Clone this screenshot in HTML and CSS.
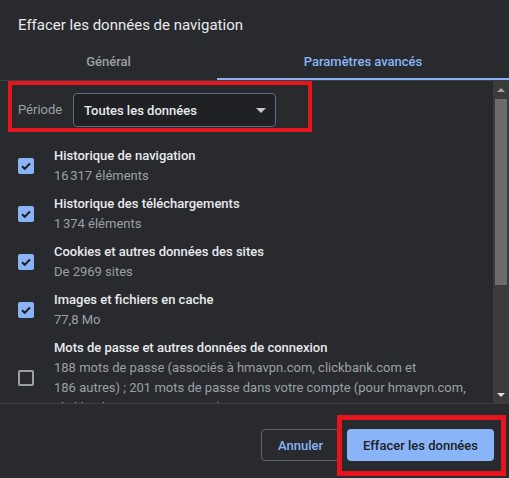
FILE: index.html
```html
<!DOCTYPE html>
<html lang="fr">
<head>
<meta charset="utf-8">
<title>Effacer les données de navigation</title>
<link rel="stylesheet" href="styles.css">
</head>
<body>
<div class="dialog">
  <div class="title">Effacer les données de navigation</div>
  <div class="tabs">
    <div class="tab">Général</div>
    <div class="tab active">Paramètres avancés</div>
  </div>
  <div class="body">
    <div class="scroll">
      <div class="period">
        <span class="period-label">Période</span>
        <div class="select">
          <span>Toutes les données</span>
          <svg class="caret" width="10" height="5" viewBox="0 0 10 5"><path d="M0 0h10L5 5z" fill="#c4c7cc"/></svg>
        </div>
      </div>
      <div class="row">
        <span class="cb checked"><svg width="16" height="16" viewBox="0 0 16 16"><path d="M4 8.2l2.7 2.6L12 5.5" fill="none" stroke="#202124" stroke-width="2"/></svg></span>
        <div class="text"><div class="label">Historique de navigation</div><div class="sub">16&#8239;317 éléments</div></div>
      </div>
      <div class="row">
        <span class="cb checked"><svg width="16" height="16" viewBox="0 0 16 16"><path d="M4 8.2l2.7 2.6L12 5.5" fill="none" stroke="#202124" stroke-width="2"/></svg></span>
        <div class="text"><div class="label">Historique des téléchargements</div><div class="sub">1&#8239;374 éléments</div></div>
      </div>
      <div class="row">
        <span class="cb checked"><svg width="16" height="16" viewBox="0 0 16 16"><path d="M4 8.2l2.7 2.6L12 5.5" fill="none" stroke="#202124" stroke-width="2"/></svg></span>
        <div class="text"><div class="label">Cookies et autres données des sites</div><div class="sub">De 2969 sites</div></div>
      </div>
      <div class="row">
        <span class="cb checked"><svg width="16" height="16" viewBox="0 0 16 16"><path d="M4 8.2l2.7 2.6L12 5.5" fill="none" stroke="#202124" stroke-width="2"/></svg></span>
        <div class="text"><div class="label">Images et fichiers en cache</div><div class="sub">77,8 Mo</div></div>
      </div>
      <div class="row">
        <span class="cb"></span>
        <div class="text"><div class="label">Mots de passe et autres données de connexion</div><div class="sub">188 mots de passe (associés à hmavpn.com, clickbank.com et 186&nbsp;autres)&nbsp;; 201 mots de passe dans votre compte (pour hmavpn.com, clickbank.com et 199&nbsp;autres)</div></div>
      </div>
      <div class="row">
        <span class="cb"></span>
        <div class="text"><div class="label">Données de saisie automatique</div><div class="sub">Aucune</div></div>
      </div>
    </div>
    <div class="scrollbar">
      <div class="arrow up"></div>
      <div class="track"><div class="thumb"></div></div>
      <div class="arrow down"></div>
    </div>
  </div>
  <div class="footer">
    <button class="btn cancel">Annuler</button>
    <button class="btn primary">Effacer les données</button>
  </div>
  <div class="mark mark-period"></div>
  <div class="mark mark-button"></div>
</div>
</body>
</html>
```
FILE: styles.css
```css
* { box-sizing: border-box; }
html, body { margin: 0; padding: 0; background: #292a2d; }
body { font-family: Roboto, "Noto Sans", sans-serif; color: #e8eaed; }

.dialog {
  position: relative;
  width: 509px;
  height: 478px;
  background: #292a2d;
  display: flex;
  flex-direction: column;
  overflow: hidden;
}

.title {
  height: 44px;
  padding: 15px 0 0 18px;
  font-size: 15px;
  line-height: 20px;
  color: #e8eaed;
}

.tabs {
  display: grid;
  grid-template-columns: 217px 1fr;
  height: 37px;
  border-bottom: 1px solid #3c4043;
}
.tab {
  display: flex;
  align-items: center;
  justify-content: center;
  font-size: 13px;
  font-weight: 500;
  color: #9aa0a6;
  border-bottom: 2px solid transparent;
}
.tab.active { color: #8ab4f8; border-bottom-color: #8ab4f8; }

.body {
  height: 323px;
  display: flex;
  border-bottom: 1px solid #3c4043;
  overflow: hidden;
}
.scroll { flex: 1; overflow: hidden; }

.period {
  display: flex;
  align-items: flex-start;
  padding: 12px 0 0 18px;
  height: 61px;
}
.period-label {
  font-size: 13px;
  color: #9aa0a6;
  line-height: 34px;
  width: 55px;
}
.select {
  width: 203px;
  height: 34px;
  border: 1px solid #5a6d8c;
  border-radius: 4px;
  background: #202124;
  display: flex;
  align-items: center;
  justify-content: space-between;
  padding: 0 9px 0 10px;
  font-size: 13px;
  font-weight: 500;
  color: #e8eaed;
}
.caret { display: block; }

.row {
  display: flex;
  align-items: center;
  padding: 4px 0;
  min-height: 48px;
}
.cb {
  flex: none;
  width: 16px;
  height: 16px;
  margin: 0 20px 0 18px;
  border: 2px solid #9aa0a6;
  border-radius: 2px;
  position: relative;
}
.cb.checked { background: #8ab4f8; border-color: #8ab4f8; }
.cb svg { position: absolute; left: -2px; top: -2px; }
.text { flex: 1; padding-right: 18px; }
.label { font-size: 13px; line-height: 20px; font-weight: 500; color: #e8eaed; }
.sub { font-size: 13px; line-height: 20px; color: #9aa0a6; }
.row .sub + .sub { margin-top: 0; }

.scrollbar {
  flex: none;
  width: 16px;
  background: #3b3b3b;
  display: flex;
  flex-direction: column;
}
.arrow { height: 17px; display: flex; justify-content: center; align-items: center; }
.arrow::before {
  content: "";
  border-left: 4px solid transparent;
  border-right: 4px solid transparent;
}
.arrow.up::before { border-bottom: 4px solid #a3a3a3; }
.arrow.down::before { border-top: 4px solid #e0e0e0; }
.track { flex: 1; padding: 1px 2px; }
.thumb { height: 186px; background: #6b6b6b; }

.footer {
  flex: 1;
  display: flex;
  justify-content: flex-end;
  align-items: flex-start;
  gap: 8px;
  padding: 25px 15px 0 0;
}
.btn {
  height: 32px;
  border-radius: 4px;
  font-family: Roboto, "Noto Sans", sans-serif;
  font-size: 13px;
  font-weight: 500;
  padding: 0 16px;
  cursor: pointer;
}
.btn.cancel {
  width: 78px;
  background: transparent;
  border: 1px solid #5f6368;
  color: #8ab4f8;
}
.btn.primary {
  width: 147px;
  background: #8ab4f8;
  border: none;
  color: #202124;
}

.mark {
  position: absolute;
  border: 4px solid #e5141d;
  pointer-events: none;
}
.mark-period { left: 8px; top: 81px; width: 304px; height: 51px; }
.mark-button { left: 337px; top: 415px; width: 169px; height: 61px; border-width: 5px; }
```
